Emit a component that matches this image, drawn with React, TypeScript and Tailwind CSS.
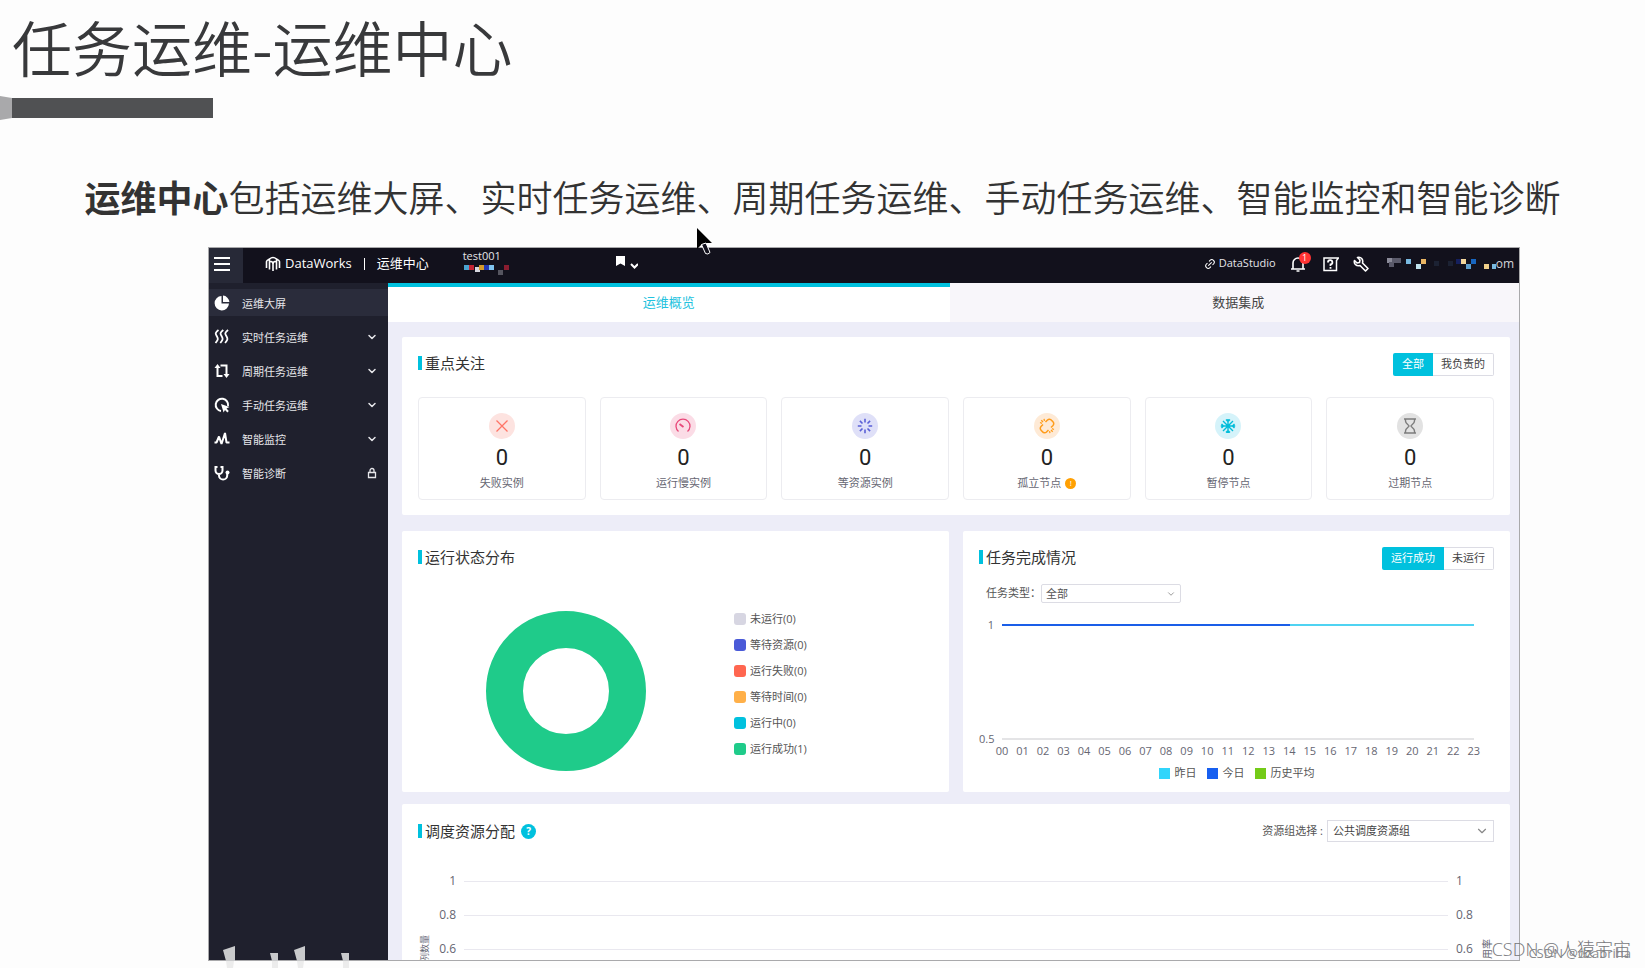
import React from 'react';
import { ChevronDown, Link2 } from 'lucide-react';

const navItems = [
  { label: '运维大屏', icon: 'pie', tail: 'none' },
  { label: '实时任务运维', icon: 'waves', tail: 'chevron' },
  { label: '周期任务运维', icon: 'cycle', tail: 'chevron' },
  { label: '手动任务运维', icon: 'manual', tail: 'chevron' },
  { label: '智能监控', icon: 'pulse', tail: 'chevron' },
  { label: '智能诊断', icon: 'steth', tail: 'lock' },
];

function NavIcon({ name }: { name: string }) {
  const p = { fill: 'none', stroke: 'currentColor', strokeWidth: 2 };
  return (
    <svg viewBox="0 0 16 16" className="h-4 w-4 shrink-0 text-white" aria-hidden="true">
      {name === 'pie' && (
        <>
          <path d="M7.5 1A7.2 7.2 0 1 0 15 8.6H7.5z" fill="currentColor" />
          <path d="M9 .6A7 7 0 0 1 15.4 7H9z" fill="currentColor" />
        </>
      )}
      {name === 'waves' && (
        <path d="M4.500 1C.5 4 1.500 5 3 7.500S4 11 1.500 14M9.300 1C5.300 4 6.300 5 7.800 7.500S8.800 11 6.300 14M14.100 1C10.100 4 11.100 5 12.600 7.500S13.600 11 11.100 14" {...p} strokeWidth={1.800} />
      )}
      {name === 'cycle' && (
        <>
          <path d="M8.500 13H3.500V4M6.500 2.500H12.500V12" {...p} />
          <path d="M.5 5L3.500 1L6.500 5zM9.500 11L12.500 15L15.500 11z" fill="currentColor" />
        </>
      )}
      {name === 'manual' && (
        <>
          <path d="M7 14A6.200 6.200 0 1 1 14 9" {...p} />
          <path d="M7 7L15.500 10L12.500 11.500L14.800 14L13.400 15.400L11 13L9.600 15.600z" fill="currentColor" />
        </>
      )}
      {name === 'pulse' && (
        <path d="M.5 11.500H2.500L5 5.500L7.500 13L11 2L12.500 11.500H15.500" {...p} strokeLinejoin="bevel" />
      )}
      {name === 'steth' && (
        <>
          <path d="M3.500 2H1.500V5.500A3.500 3.500 0 0 0 8.500 5.500V2H6.500M5 9V10.500A4 4 0 0 0 13.200 10.500V9" {...p} />
          <circle cx="13.500" cy="7.500" r="2" fill="currentColor" />
        </>
      )}
    </svg>
  );
}

function StatIcon({ name }: { name: string }) {
  return (
    <svg viewBox="0 0 16 16" className="h-4 w-4" fill="none" stroke="currentColor" strokeWidth="1.300" aria-hidden="true">
      {name === 'fail' && <path d="M2.500 2.500L13.500 13.500M13.500 2.500L2.500 13.500" />}
      {name === 'slow' && (
        <>
          <path d="M3.500 13.500A7 7 0 1 1 12.500 13.500" />
          <path d="M4.500 6L8.500 9" strokeWidth="1.800" />
        </>
      )}
      {name === 'wait' && (
        <path d="M8 .8V4.500M8 11.500V15.200M.8 8H4.500M11.500 8H15.200M2.900 2.900L5.500 5.500M10.500 10.500L13.100 13.100M13.100 2.900L10.500 5.500M5.500 10.500L2.900 13.100" strokeWidth="1.600" />
      )}
      {name === 'orphan' && (
        <>
          <path d="M6.500 4L8.500 2A2.700 2.700 0 0 1 12.500 2.300L13.800 3.600A2.700 2.700 0 0 1 14 7.500L12 9.500M9.500 12L7.500 14A2.700 2.700 0 0 1 3.500 13.700L2.200 12.400A2.700 2.700 0 0 1 2 8.500L4 6.500" strokeWidth="1.500" />
          <path d="M1 4.500L3 5.300M2.300 2.300L4 4M5 .8L5.500 2.800M15 11.500L13 10.700M13.700 13.700L12 12M11 15.200L10.500 13.200" />
        </>
      )}
      {name === 'pause' && (
        <path d="M8 1V15M.8 8H15.200M3 3L13 13M13 3L3 13M6 1.500L8 3.500L10 1.500M6 14.500L8 12.500L10 14.500M1.500 6L3.500 8L1.500 10M14.500 6L12.500 8L14.500 10" strokeWidth="1.400" />
      )}
      {name === 'expired' && (
        <path d="M2 1H14M2 15H14M3.500 1V3C3.500 6 7 7 7 8S3.500 10 3.500 13V15M12.500 1V3C12.500 6 9 7 9 8S12.500 10 12.500 13V15" strokeWidth="1.400" />
      )}
    </svg>
  );
}

const stats = [
  { label: '失败实例', icon: 'fail', tone: 'bg-[#fde3e0] text-[#ff7466]' },
  { label: '运行慢实例', icon: 'slow', tone: 'bg-[#fbdce6] text-[#e8487a]' },
  { label: '等资源实例', icon: 'wait', tone: 'bg-[#dfe0f8] text-[#5a5fd6]' },
  { label: '孤立节点', icon: 'orphan', tone: 'bg-[#feead6] text-[#ff9c1a]', warn: true },
  { label: '暂停节点', icon: 'pause', tone: 'bg-[#d5f3fa] text-[#00bcd9]' },
  { label: '过期节点', icon: 'expired', tone: 'bg-[#e2e2e2] text-[#7c7c7c]' },
];

const statusLegend = [
  { label: '未运行(0)', color: 'bg-[#d7d6e2]' },
  { label: '等待资源(0)', color: 'bg-[#4a5ad8]' },
  { label: '运行失败(0)', color: 'bg-[#ff6650]' },
  { label: '等待时间(0)', color: 'bg-[#ffb049]' },
  { label: '运行中(0)', color: 'bg-[#00c1de]' },
  { label: '运行成功(1)', color: 'bg-[#1fcb8a]' },
];

const hours = Array.from({ length: 24 }, (_, i) => String(i).padStart(2, '0'));

function Heading({ children }: { children: React.ReactNode }) {
  return (
    <h2 className="flex items-center gap-[3px] text-[15px] leading-5 text-[#333]">
      <span className="h-[14px] w-1 bg-[#00c1de]" />
      {children}
    </h2>
  );
}

function Segmented({ on, off }: { on: string; off: string }) {
  return (
    <div className="flex h-[23px] text-[11px]">
      <button type="button" className="rounded-l-xs bg-[#00c1de] px-[9px] text-white">{on}</button>
      <button type="button" className="rounded-r-xs border border-l-0 border-[#dcdce4] px-2 text-[#444]">{off}</button>
    </div>
  );
}

function Mosaic({ className, cells }: { className: string; cells: [number, number, string][] }) {
  return (
    <svg viewBox="0 0 116 15" preserveAspectRatio="xMinYMin slice" className={className} aria-hidden="true">
      {cells.map(([x, y, c], i) => (
        <rect key={i} x={x} y={y} width="5" height="5" fill={c} />
      ))}
    </svg>
  );
}

function TopBar() {
  return (
    <header className="flex h-[35px] shrink-0 bg-[#12111c] text-white">
      <button type="button" aria-label="菜单" className="flex h-full w-[34px] items-center bg-[#272937] pb-1 pl-[5px]">
        <svg viewBox="0 0 16 14" className="h-[14px] w-4" stroke="currentColor" strokeWidth="2" aria-hidden="true">
          <path d="M0 1H16M0 7H16M0 13H16" />
        </svg>
      </button>
      <div className="flex min-w-0 flex-1 items-center pb-1">
        <svg viewBox="0 0 16 16" className="ml-[22px] h-4 w-4" fill="none" stroke="currentColor" strokeWidth="1.600" aria-hidden="true">
          <path d="M1.500 12V5.500Q1.500 4.500 4.500 3V13.500M4.500 3Q8 0 11.500 3V13.500M14.500 12V5.500Q14.500 4.500 11.500 3M8 15V6.500M4.500 6Q7.500 4.500 8 8Q8.500 4.500 11.500 6" />
        </svg>
        <span className="ml-1 text-[13px] font-medium">DataWorks</span>
        <span className="mx-[12px] h-3 w-px bg-white" />
        <span className="text-[13px]">运维中心</span>
        <div className="ml-[34px] flex w-[153px] flex-col text-[11px] leading-[14px] text-[#e4e4e8]">
          <span>test001</span>
          <Mosaic
            className="h-[15px] w-[116px]"
            cells={[[1, 2, '#4aa3cf'], [6, 2, '#c22332'], [12, 4, '#d8d8e0'], [16, 2, '#d49b2a'], [21, 2, '#2237b0'], [26, 2, '#7fc4ee'], [35, 7, '#55555f'], [41, 2, '#8a1d30']]}
          />
        </div>
        <svg viewBox="0 0 22 16" className="h-4 w-[22px]" aria-hidden="true">
          <path d="M0 0H9V10L4.500 7.500L0 10z" fill="currentColor" />
          <path d="M15 8L18.500 11.500L22 8" fill="none" stroke="currentColor" strokeWidth="2" />
        </svg>
        <div className="ml-auto flex items-center pr-[5px]">
          <Link2 className="h-3 w-3 -rotate-45" />
          <a href="#studio" className="ml-[3px] text-[11px] text-[#e4e4e8]">DataStudio</a>
          <button type="button" aria-label="通知" className="relative ml-[14px]">
            <svg viewBox="0 0 16 16" className="h-4 w-4" fill="none" stroke="currentColor" strokeWidth="1.600" aria-hidden="true">
              <path d="M1 13H15M3 13V7A5 5 0 0 1 13 7V13M6.500 15H9.500" />
            </svg>
            <span className="absolute -top-1 left-[9px] flex h-3 w-3 items-center justify-center rounded-full bg-[#ff3333] text-[9px]">1</span>
          </button>
          <button type="button" aria-label="帮助" className="ml-[17px]">
            <svg viewBox="0 0 16 16" className="h-4 w-4" fill="none" stroke="currentColor" strokeWidth="1.500" aria-hidden="true">
              <path d="M1 2H15.500L13.500 4.500V14.500H1z" />
              <path d="M5 6.500A2.200 2.200 0 1 1 7.500 8.500V10M7.500 11V12.800" strokeWidth="1.800" />
            </svg>
          </button>
          <button type="button" aria-label="设置" className="ml-[14px]">
            <svg viewBox="0 0 16 16" className="h-4 w-4" fill="none" stroke="currentColor" strokeWidth="1.600" strokeLinejoin="round" aria-hidden="true">
              <path d="M4.500 1.500L7 4L6.500 6.500L4 7L1.500 4.500C.5 8 3.500 10.500 7 9.500L12.500 15L15 12.500L9.500 7C10.500 3.500 8 .5 4.500 1.500z" />
            </svg>
          </button>
          <div className="ml-[17px] flex items-center">
            <Mosaic
              className="h-[15px] w-[110px]"
              cells={[[1, 2, '#8b8b99'], [6, 2, '#5b5b6b'], [10, 2, '#5b5b6b'], [3, 6, '#5b5b6b'], [20, 3, '#79b9e0'], [30, 8, '#bfe3ee'], [35, 3, '#e9b563'], [48, 5, '#1c2233'], [62, 5, '#1c2233'], [70, 3, '#15205e'], [75, 3, '#f3d79b'], [80, 8, '#5da0cf'], [85, 3, '#1766c0'], [98, 8, '#f0cf8a'], [106, 8, '#79b9e0']]}
            />
            <span className="text-[12px] text-[#d4d4da]">om</span>
          </div>
        </div>
      </div>
    </header>
  );
}

function Sidebar() {
  return (
    <nav className="w-[179px] shrink-0 bg-[#1f202d] pt-[6px]">
      <ul className="flex flex-col gap-[7px]">
        {navItems.map((item, i) => (
          <li key={item.label}>
            <a href="#nav" className={`flex h-[27px] items-center pl-[5px] pr-[10px] text-[11px] text-[#e6e6ea] ${i === 0 ? 'bg-[#2a2c3b]' : ''}`}>
              <NavIcon name={item.icon} />
              <span className="ml-[12px] flex-1 pt-[3px]">{item.label}</span>
              {item.tail === 'chevron' && <ChevronDown className="h-3 w-3" strokeWidth={3} />}
              {item.tail === 'lock' && (
                <svg viewBox="0 0 12 12" className="h-3 w-3" fill="none" stroke="currentColor" strokeWidth="1.300" aria-hidden="true">
                  <path d="M2.500 5.500H9.500V10.500H2.500zM4 5.500V3.500A2 2 0 0 1 8 3.500V5.500" />
                </svg>
              )}
            </a>
          </li>
        ))}
      </ul>
    </nav>
  );
}

function CompletionChart() {
  return (
    <div className="mt-[14px] flex text-[11px] text-[#666672]">
      <div className="flex h-[130px] w-[15px] flex-col justify-between text-right leading-4">
        <span>1</span>
        <span>0.5</span>
      </div>
      <div className="ml-[8px] mr-5 flex-1">
        <div className="mt-[7px] flex h-[2px]">
          <span className="w-[61%] bg-[#1a5ee8]" />
          <span className="flex-1 bg-[#4fd3f2]" />
        </div>
        <div className="h-[114px] border-b-2 border-[#e4e4e6]" />
        <div className="-mx-[10px] mt-[3px] flex justify-between leading-4">
          {hours.map((h) => (
            <span key={h} className="w-5 text-center">{h}</span>
          ))}
        </div>
      </div>
    </div>
  );
}

function Dashboard() {
  return (
    <main className="flex min-w-0 flex-1 flex-col bg-[#ededf8]">
      <div className="flex h-[39px] shrink-0 text-[13px]">
        <button type="button" className="flex-1 border-t-4 border-[#00c1de] bg-white pb-1 text-[#22c2de]">运维概览</button>
        <button type="button" className="flex-1 bg-[#f8f6fa] pl-2 text-[#444]">数据集成</button>
      </div>
      <div className="flex flex-1 flex-col pl-[14px] pr-[9px] pt-[15px]">
        <section className="h-[178px] shrink-0 rounded-xs bg-white px-4 pt-4">
          <div className="flex items-start justify-between">
            <Heading>重点关注</Heading>
            <Segmented on="全部" off="我负责的" />
          </div>
          <div className="mt-[21px] grid grid-cols-6 gap-[14px]">
            {stats.map((s) => (
              <div key={s.label} className="flex h-[103px] flex-col items-center rounded border border-[#ececf0] pt-[15px]">
                <span className={`flex h-[26px] w-[26px] items-center justify-center rounded-full ${s.tone}`}>
                  <StatIcon name={s.icon} />
                </span>
                <span className="mt-[7px] font-['Roboto',sans-serif] text-[22px] leading-6 text-[#222]">0</span>
                <span className="mt-[5px] flex items-center gap-1 text-[11px] leading-4 text-[#666672]">
                  {s.label}
                  {s.warn && (
                    <span className="flex h-[11px] w-[11px] items-center justify-center rounded-full bg-[#ffa003] text-[8px] leading-none text-white">!</span>
                  )}
                </span>
              </div>
            ))}
          </div>
        </section>

        <div className="mt-4 grid h-[261px] shrink-0 grid-cols-2 gap-[14px]">
          <section className="rounded-xs bg-white px-4 pt-4">
            <Heading>运行状态分布</Heading>
            <div className="flex items-start pl-[68px] pt-[44px]">
              <svg viewBox="0 0 160 160" className="h-[160px] w-[160px]" role="img" aria-label="运行状态分布">
                <circle cx="80" cy="80" r="61.500" fill="none" stroke="#1fcb8a" strokeWidth="37" />
              </svg>
              <ul className="ml-[88px] flex flex-col gap-[10px] text-[11px] leading-4 text-[#555]">
                {statusLegend.map((l) => (
                  <li key={l.label} className="flex items-center gap-1">
                    <span className={`h-3 w-3 rounded-[3px] ${l.color}`} />
                    {l.label}
                  </li>
                ))}
              </ul>
            </div>
          </section>

          <section className="rounded-xs bg-white px-4 pt-4">
            <div className="flex items-start justify-between">
              <Heading>任务完成情况</Heading>
              <Segmented on="运行成功" off="未运行" />
            </div>
            <div className="mt-[14px] flex items-center pl-[7px] text-[11px] text-[#555]">
              <label htmlFor="task-type">任务类型：</label>
              <div className="relative">
                <select id="task-type" className="block h-[19px] w-[140px] appearance-none rounded-xs border border-[#dcdce4] bg-white pl-1 text-[11px] leading-4">
                  <option>全部</option>
                </select>
                <ChevronDown className="pointer-events-none absolute right-[5px] top-[5px] h-[10px] w-[10px] text-[#888]" />
              </div>
            </div>
            <CompletionChart />
            <ul className="mt-1 flex justify-center gap-[10px] text-[11px] leading-5 text-[#555]">
              <li className="flex items-center gap-[5px]"><span className="h-[11px] w-[11px] bg-[#31d5fb]" />昨日</li>
              <li className="flex items-center gap-[5px]"><span className="h-[11px] w-[11px] bg-[#175ff0]" />今日</li>
              <li className="flex items-center gap-[5px]"><span className="h-[11px] w-[11px] bg-[#74cb18]" />历史平均</li>
            </ul>
          </section>
        </div>

        <section className="mt-3 flex-1 rounded-t-xs bg-white px-4 pt-4">
          <div className="flex items-center">
            <Heading>调度资源分配</Heading>
            <span className="ml-[6px] flex h-[15px] w-[15px] items-center justify-center rounded-full bg-[#00c1de] text-[10px] font-bold leading-none text-white">?</span>
            <label htmlFor="resource-group" className="ml-auto mr-1 text-[11px] text-[#555]">资源组选择 :</label>
            <div className="relative">
              <select id="resource-group" className="block h-[22px] w-[167px] appearance-none border border-[#dcdce4] bg-white pl-[5px] text-[11px] text-[#444]">
                <option>公共调度资源组</option>
              </select>
              <ChevronDown className="pointer-events-none absolute right-[5px] top-1 h-[14px] w-[14px] text-[#888]" />
            </div>
          </div>
          <div className="mt-[31px] flex items-start text-[12px] leading-4 text-[#666672]">
            <span className="mt-[62px] w-[14px] rotate-180 text-[9px] leading-[14px] [text-orientation:sideways] [writing-mode:vertical-rl]">例数量</span>
            <ul className="flex flex-1 flex-col gap-[18px]">
              {['1', '0.8', '0.6'].map((v) => (
                <li key={v} className="flex items-center">
                  <span className="w-6 text-right">{v}</span>
                  <span className="mx-2 h-px flex-1 bg-[#e9e8ef]" />
                  <span className="w-6">{v}</span>
                </li>
              ))}
            </ul>
            <span className="mt-[66px] w-[14px] rotate-180 text-[10px] leading-[14px] [text-orientation:sideways] [writing-mode:vertical-rl]">用率</span>
          </div>
        </section>
      </div>
    </main>
  );
}

export default function App() {
  return (
    <div className="relative flex h-screen flex-col overflow-hidden bg-[#fdfdfd] pb-[7px] font-['Open_Sans','Noto_Sans_CJK_SC',sans-serif]">
      <h1 className="pl-3 pt-[6px] font-['Noto_Sans_CJK_SC',sans-serif] text-[60px] font-[350] leading-[80px] text-[#38393b]">任务运维-运维中心</h1>
      <svg viewBox="0 0 213 26" className="mt-[9px] h-[26px] w-[213px] shrink-0" aria-hidden="true">
        <path d="M0 1L12 3V23L0 25z" fill="#a9a9ab" />
        <path d="M12 3H213V23H12z" fill="#505153" />
      </svg>
      <p className="mt-[49px] whitespace-nowrap text-center font-['Noto_Sans_CJK_SC',sans-serif] text-[36px] font-[350] leading-[52px] text-[#333]">
        <strong className="font-bold">运维中心</strong>包括运维大屏、实时任务运维、周期任务运维、手动任务运维、智能监控和智能诊断
      </p>
      <div className="ml-[208px] mr-[125px] mt-[25px] flex min-h-0 flex-1 flex-col overflow-hidden border border-[#a9a9ab]">
        <TopBar />
        <div className="flex min-h-0 flex-1 overflow-hidden">
          <Sidebar />
          <Dashboard />
        </div>
      </div>
      <svg viewBox="0 0 16 28" className="absolute left-[696px] top-[227px] h-7 w-4" aria-hidden="true">
        <path d="M1 1V22L5.500 17.500L10 16H16z" fill="#000" />
        <path d="M5.500 17.500L9.500 26.500Q12 28 14 25.500L10 16z" fill="#12111c" stroke="#fff" strokeWidth="1" />
      </svg>
      <svg viewBox="0 0 140 22" className="absolute bottom-0 left-[223px] h-[22px] w-[140px]" fill="#c9cacc" aria-hidden="true">
        <path d="M0 4L12 0V15H3zM47 7H55V15H49zM71 4L82 0V15H74zM118 7H126V15H120z" />
        <path d="M3 15H11L10 22H4zM49 15H55V22H49zM74 15H81L80 22H75zM120 15H126V22H120z" fill="#ececec" />
      </svg>
      <span className="absolute bottom-[7px] right-[14px] text-[18px] font-light leading-6 text-[#77787b]">CSDN @人猿宇宙</span>
      <span className="absolute bottom-[5px] right-[14px] text-[13px] leading-5 text-[#88898c]">CSDN @dzabriha</span>
    </div>
  );
}
